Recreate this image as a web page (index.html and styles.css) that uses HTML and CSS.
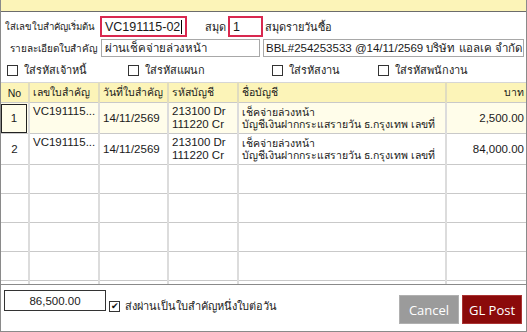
FILE: index.html
```html
<!DOCTYPE html>
<html>
<head>
    <title>GL Post</title>
    <link rel="stylesheet" href="styles.css">
</head>
<body>
<div class="window">
    <div class="titlebar"></div>
    <div class="form">
        <div class="row row-start">
            <span class="lbl lbl-start">ใส่เลขใบสำคัญเริ่มต้น</span>
            <div class="box box-red box-voucher">VC191115-02<span class="caret"></span></div>
            <span class="lbl lbl-book">สมุด</span>
            <div class="box box-red box-book">1</div>
            <span class="lbl lbl-bookname">สมุดรายวันซื้อ</span>
        </div>
        <div class="row row-detail">
            <span class="lbl lbl-detail">รายละเอียดใบสำคัญ</span>
            <div class="box box-desc">ผ่านเช็คจ่ายล่วงหน้า</div>
            <div class="box box-ref">BBL#254253533 @14/11/2569 บริษัท แอลเค จำกัด</div>
        </div>
        <div class="row row-checks">
            <label class="chk chk-1"><span class="cb"></span>ใส่รหัสเจ้าหนี้</label>
            <label class="chk chk-2"><span class="cb"></span>ใส่รหัสแผนก</label>
            <label class="chk chk-3"><span class="cb"></span>ใส่รหัสงาน</label>
            <label class="chk chk-4"><span class="cb"></span>ใส่รหัสพนักงาน</label>
        </div>
    </div>
    <div class="grid-wrap">
        <table class="grid">
            <colgroup>
                <col class="c-no"><col class="c-vc"><col class="c-date"><col class="c-acc"><col class="c-name"><col class="c-amt">
            </colgroup>
            <thead>
                <tr>
                    <th class="center">No</th>
                    <th>เลขใบสำคัญ</th>
                    <th>วันที่ใบสำคัญ</th>
                    <th>รหัสบัญชี</th>
                    <th>ชื่อบัญชี</th>
                    <th class="right">บาท</th>
                </tr>
            </thead>
            <tbody>
                <tr class="sel">
                    <td class="center"><span class="focus">1</span></td>
                    <td class="top">VC191115...</td>
                    <td>14/11/2569</td>
                    <td class="two">213100 Dr<br>111220 Cr</td>
                    <td class="two small">เช็คจ่ายล่วงหน้า<br>บัญชีเงินฝากกระแสรายวัน ธ.กรุงเทพ เลขที่</td>
                    <td class="right">2,500.00</td>
                </tr>
                <tr>
                    <td class="center">2</td>
                    <td class="top">VC191115...</td>
                    <td>14/11/2569</td>
                    <td class="two">213100 Dr<br>111220 Cr</td>
                    <td class="two small">เช็คจ่ายล่วงหน้า<br>บัญชีเงินฝากกระแสรายวัน ธ.กรุงเทพ เลขที่</td>
                    <td class="right">84,000.00</td>
                </tr>
                <tr><td></td><td></td><td></td><td></td><td></td><td></td></tr>
                <tr><td></td><td></td><td></td><td></td><td></td><td></td></tr>
                <tr><td></td><td></td><td></td><td></td><td></td><td></td></tr>
                <tr><td></td><td></td><td></td><td></td><td></td><td></td></tr>
                <tr><td></td><td></td><td></td><td></td><td></td><td></td></tr>
            </tbody>
        </table>
    </div>
    <div class="footer">
        <div class="total">86,500.00</div>
        <label class="chk chk-one"><span class="cb checked">&#10004;</span>ส่งผ่านเป็นใบสำคัญหนึ่งใบต่อวัน</label>
        <div class="buttons">
            <button class="btn btn-cancel">Cancel</button>
            <button class="btn btn-post">GL Post</button>
        </div>
    </div>
</div>
</body>
</html>
```

FILE: styles.css
```css
html, body { margin: 0; padding: 0; background: #fff; }
body { font-family: "Liberation Sans", Arial, sans-serif; font-size: 11.5px; color: #1a1a1a; }

.window {
    width: 527px; height: 332px; box-sizing: border-box;
    border: 1px solid #8a8a8a; border-top: none;
    display: flex; flex-direction: column; overflow: hidden;
}
.titlebar { height: 11px; background: #fcf4b8; border-bottom: 1px solid #6c6c6c; flex: none; }

.form { height: 70px; flex: none; box-sizing: border-box; padding-top: 4px; }
.row { display: flex; align-items: center; }
.row-start { height: 21px; }
.row-detail { height: 18px; margin-top: 2px; }
.row-checks { height: 16px; margin-top: 5px; }

.lbl { white-space: nowrap; font-size: 11px; flex: none; }
.lbl-start { margin-left: 4px; width: 95px; font-size: 9.6px; }
.lbl-book { margin-left: 18px; width: 23px; }
.lbl-bookname { margin-left: 2px; }
.lbl-detail { margin-left: 9px; width: 91px; font-size: 10px; }

.box {
    box-sizing: border-box; height: 100%; border: 1px solid #a8a8a8; background: #fff; flex: none;
    display: flex; align-items: center; padding-left: 3px; white-space: nowrap; overflow: hidden;
}
.box-red { border: 2px solid #d9284f; font-size: 12.5px; padding-left: 3px; }
.box-voucher { width: 87px; }
.box-book { width: 35px; }
.caret { display: inline-block; width: 1px; height: 14px; background: #000; margin-left: 1px; }
.box-desc { width: 159px; }
.box-ref { width: 261px; margin-left: 3px; padding-left: 2px; }

.chk { display: flex; align-items: center; white-space: nowrap; font-size: 11px; }
.cb {
    width: 9px; height: 9px; border: 1px solid #333; background: #fff;
    margin-right: 6px; flex: none; display: flex; align-items: center; justify-content: center;
    font-size: 9px; line-height: 1;
}
.chk-1 { margin-left: 6px; width: 121px; }
.chk-2 { width: 144px; }
.chk-3 { width: 106px; }

.grid-wrap {
    height: 202px; flex: none; overflow: hidden;
    border-bottom: 1px solid #8a8a8a;
}
.grid { border-collapse: collapse; table-layout: fixed; width: 526px; }
.c-no { width: 28px; }
.c-vc { width: 70px; }
.c-date { width: 69px; }
.c-acc { width: 70px; }
.c-name { width: 208px; }
.c-amt { width: 81px; }

.grid th {
    height: 19px; background: #fcf4b8; font-weight: normal; text-align: left; font-size: 10.5px;
    padding: 0 3px; border-right: 2px solid #e0dcc0; border-bottom: 1px solid #c9c9c9;
    border-top: 1px solid #d6d6d6;
    white-space: nowrap; overflow: hidden;
}
.grid td {
    height: 28px; padding: 0 3px; border-right: 2px solid #dcdcdc; border-bottom: 1px solid #c9c9c9;
    white-space: nowrap; overflow: hidden; vertical-align: middle;
}
.grid th:last-child, .grid td:last-child { border-right: none; }
.grid .center { text-align: center; }
.grid .right { text-align: right; }
.grid td.top { vertical-align: top; padding-top: 2px; }
.grid td.two { line-height: 13px; }
.grid td.small { font-size: 10.5px; line-height: 12px; }
.grid tr.sel td { background: #fffdea; }
.grid td.center { padding: 0; }
.focus {
    display: flex; align-items: center; justify-content: center;
    height: 27px; border: 1px solid #222; margin: 0 1px 0 0;
}

.footer { flex: 1; display: flex; align-items: flex-start; }
.total {
    margin: 5px 0 0 3px; width: 102px; height: 21px; box-sizing: border-box;
    border: 1px solid #333; display: flex; align-items: center; justify-content: center;
}
.chk-one { margin: 12px 0 0 3px; }
.chk-one .cb { margin-right: 5px; color: #111; }
.buttons { margin-left: auto; margin-right: 4px; margin-top: 10px; display: flex; gap: 3px; }
.btn {
    width: 60px; height: 29px; border: 1px solid transparent; color: #fff;
    font-family: "Open Sans", "Liberation Sans", sans-serif; font-size: 13px; padding: 0;
}
.btn-cancel { background: #9b9b9b; border-color: #b0b0b0; }
.btn-post { background: #8b0a0a; border-color: #a33; }
```
